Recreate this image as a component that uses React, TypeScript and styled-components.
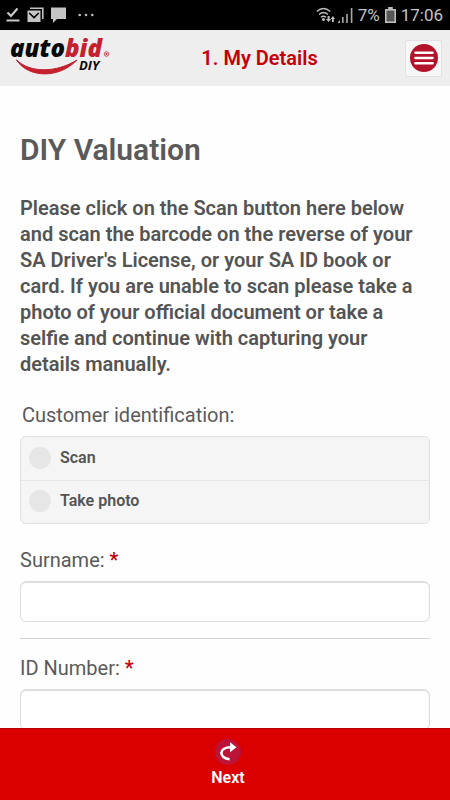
import React from "react";
import styled, { createGlobalStyle } from "styled-components";

const GlobalStyle = createGlobalStyle`
  *, *::before, *::after { box-sizing: border-box; }
  body { margin: 0; background: #fefefe; font-family: Roboto, "Liberation Sans", sans-serif; color: #545454; }
  h1, h2, p, fieldset, legend { margin: 0; padding: 0; border: 0; }
`;

const Screen = styled.div`
  display: flex;
  flex-direction: column;
  height: 100vh;
  overflow: hidden;
`;

const StatusBar = styled.div`
  display: flex;
  justify-content: space-between;
  align-items: center;
  flex: none;
  height: 30px;
  padding: 0 7px 0 6px;
  background: #000;
  color: #c4c4c4;
  font-size: 17px;
  line-height: 30px;
`;

const StatusGroup = styled.div<{ $gap: number }>`
  display: flex;
  align-items: center;
  gap: ${(p) => p.$gap}px;
  svg { display: block; }
`;

const Header = styled.header`
  display: grid;
  grid-template-columns: 1fr auto 1fr;
  align-items: center;
  flex: none;
  height: 56px;
  padding: 0 8px;
  background: #eee;
`;

const HomeLink = styled.a`
  justify-self: start;
  svg { display: block; }
`;

const PageTitle = styled.h1`
  padding-left: 69px;
  font-size: 20px;
  line-height: 24px;
  font-weight: 600;
  color: #c40008;
`;

const MenuButton = styled.button`
  justify-self: end;
  display: grid;
  place-items: center;
  width: 37px;
  height: 37px;
  padding: 0;
  border: 1px solid #e0e0e6;
  border-radius: 2px;
  background: #f7f7f8;
  cursor: pointer;
`;

const Content = styled.main`
  flex: 1;
  min-height: 0;
  overflow: hidden;
  padding: 46px 20px 0;
`;

const Heading = styled.h2`
  font-size: 30px;
  line-height: 36px;
  font-weight: 600;
  color: #5a5a5a;
`;

const Intro = styled.p`
  margin: 27px 0 0;
  font-size: 20px;
  line-height: 26px;
  font-weight: 600;
`;

const ChoiceGroup = styled.fieldset`
  min-width: 0;
  margin-top: 26px;
`;

const Legend = styled.legend`
  padding-left: 2px;
  font-size: 20px;
  line-height: 24px;
  color: #5a5a5a;
`;

const ChoiceBox = styled.div`
  margin-top: 9px;
  border: 1px solid #e0e0e0;
  border-radius: 6px;
  background: #f5f5f5;
  overflow: hidden;
`;

const Choice = styled.label`
  display: flex;
  align-items: center;
  gap: 9px;
  height: 43px;
  padding: 0 8px 2px;
  font-size: 16px;
  line-height: 20px;
  font-weight: 600;
  cursor: pointer;
  & + & { border-top: 1px solid #e6e6e6; }
`;

const Radio = styled.input`
  appearance: none;
  width: 22px;
  height: 22px;
  margin: 0;
  border-radius: 50%;
  background: #e6e6e6;
  &:checked { border: 6px solid #c40008; }
`;

const Field = styled.div`
  padding: 24px 0 16px;
  border-bottom: 1px solid #d4d4d4;
  & + & { padding-top: 17px; }
`;

const FieldLabel = styled.label`
  display: block;
  font-size: 20px;
  line-height: 24px;
  color: #5a5a5a;
`;

const Required = styled.span`
  color: #c40008;
  font-weight: 500;
`;

const TextInput = styled.input`
  display: block;
  width: 100%;
  height: 41px;
  margin-top: 9px;
  padding: 0 10px;
  border: 1px solid #dcdcdc;
  border-radius: 6px;
  background: #fff;
  box-shadow: inset 0 1px 1px #dcdcdc;
  font: inherit;
  font-size: 18px;
`;

const NextButton = styled.button`
  display: flex;
  flex-direction: column;
  align-items: center;
  gap: 3px;
  flex: none;
  height: 72px;
  padding: 10px 0 0 6px;
  border: 0;
  border-top: 1px solid #b80000;
  background: #da0000;
  color: #fff;
  font-family: inherit;
  font-size: 16px;
  line-height: 20px;
  font-weight: 600;
  cursor: pointer;
`;

const DownloadIcon = () => (
  <svg width="14" height="16" viewBox="0 0 14 16" aria-hidden="true">
    <path d="M1.5 5.5 5 9l6.5-7.5" fill="none" stroke="#c8c8c8" strokeWidth="2.2" />
    <path d="M0.5 13.5h13" stroke="#c8c8c8" strokeWidth="2" />
  </svg>
);

const MailIcon = () => (
  <svg width="17" height="16" viewBox="0 0 17 16" aria-hidden="true">
    <path d="M3 1.2h12.8V12" fill="none" stroke="#c4c4c4" strokeWidth="1.6" />
    <rect x="0.5" y="3.5" width="13" height="11.5" fill="#c4c4c4" />
    <path d="m2.2 6 4.8 4.6L11.8 6" fill="none" stroke="#000" strokeWidth="1.5" />
  </svg>
);

const ChatIcon = () => (
  <svg width="15" height="16" viewBox="0 0 15 16" aria-hidden="true">
    <path d="M0 0.5h15v11.5H6l-4 4v-4H0z" fill="#c4c4c4" />
  </svg>
);

const DotsIcon = () => (
  <svg width="16" height="4" viewBox="0 0 16 4" fill="#bdbdbd" aria-hidden="true">
    <circle cx="1.7" cy="2" r="1.3" />
    <circle cx="8" cy="2" r="1.3" />
    <circle cx="14.3" cy="2" r="1.3" />
  </svg>
);

const WifiIcon = () => (
  <svg width="20" height="16" viewBox="0 0 20 16" aria-hidden="true">
    <g fill="none" stroke="#bdbdbd" strokeWidth="1.4">
      <path d="M0.8 4.5Q7.5-1.7 14.2 4.5" />
      <path d="M3 7.5q4.5-4 9 0" />
      <path d="M5 10.2q2.5-2 5 0" />
    </g>
    <circle cx="7.5" cy="12.6" r="1.5" fill="#bdbdbd" />
    <path d="M11.6 9h2v3h1.6l-2.6 3-2.6-3h1.6zM16 15h1.8v-3h1.4l-2.3-3-2.3 3H16z" fill="#bdbdbd" />
  </svg>
);

const SignalIcon = () => (
  <svg width="15" height="15" viewBox="0 0 15 15" fill="#a8a8a8" aria-hidden="true">
    <path d="M0 15v-1l2-2v3zM4 9h1.6v6H4zM8.2 6h1.6v9H8.2zM12.8 0h1.6v15h-1.6z" />
  </svg>
);

const BatteryIcon = () => (
  <svg width="11" height="16" viewBox="0 0 11 16" aria-hidden="true">
    <path d="M3.2 0h4.6v2H11v14H0V2h3.2z" fill="#bdbdbd" />
    <path d="M1.6 3.6h7.8v10.8H1.6z" fill="#555" />
  </svg>
);

const Logo = () => (
  <svg width="104" height="56" viewBox="0 0 104 56" role="img" aria-label="autobid DIY">
    <path d="M8.5 30C22 43 48 43 69 30 51 49 20 48 8.5 30z" fill="#c4202e" stroke="#c4202e" strokeLinejoin="round" />
    <text x="2" y="27" fontFamily='"Open Sans", sans-serif' fontStyle="italic" fontWeight="800" fontSize="24" fill="#0a0a0a">
      auto<tspan fill="#c4202e">bid</tspan>
    </text>
    <circle cx="98.5" cy="24" r="2.3" fill="none" stroke="#d0505a" strokeWidth="1" />
    <circle cx="98.5" cy="24" r="0.9" fill="#c4202e" />
    <text x="71" y="40" fontFamily='"Open Sans", sans-serif' fontStyle="italic" fontWeight="700" fontSize="13" fill="#0a0a0a">
      DIY
    </text>
  </svg>
);

const MenuIcon = () => (
  <svg width="28" height="28" viewBox="0 0 28 28" aria-hidden="true">
    <circle cx="14" cy="14" r="14" fill="#b3142b" />
    <path d="M5.5 8.7h17M5.5 14h17M5.5 19.3h17" stroke="#fff" strokeWidth="2.6" strokeLinecap="round" />
  </svg>
);

const NextIcon = () => (
  <svg width="26" height="26" viewBox="0 0 26 26" aria-hidden="true">
    <circle cx="13" cy="13" r="13" fill="#bb1438" />
    <path d="M14.6 20.2C3.500 19.200 3.500 8.300 15.500 8.200" fill="none" stroke="#fff" strokeWidth="2.6" />
    <path d="M15 3.200 21.500 8.200l-6.500 5z" fill="#fff" />
  </svg>
);

const choices = ["Scan", "Take photo"];
const fields = [
  { id: "surname", label: "Surname:" },
  { id: "id-number", label: "ID Number:" },
];

export default function App() {
  return (
    <Screen>
      <GlobalStyle />
      <StatusBar>
        <StatusGroup $gap={12}>
          <StatusGroup $gap={7}>
            <DownloadIcon />
            <MailIcon />
            <ChatIcon />
          </StatusGroup>
          <DotsIcon />
        </StatusGroup>
        <StatusGroup $gap={5}>
          <StatusGroup $gap={2}>
            <WifiIcon />
            <SignalIcon />
          </StatusGroup>
          <span>7%</span>
          <BatteryIcon />
          <span>17:06</span>
        </StatusGroup>
      </StatusBar>
      <Header>
        <HomeLink href="#">
          <Logo />
        </HomeLink>
        <PageTitle>1. My Details</PageTitle>
        <MenuButton type="button" aria-label="Menu">
          <MenuIcon />
        </MenuButton>
      </Header>
      <Content>
        <Heading>DIY Valuation</Heading>
        <Intro>
          Please click on the Scan button here below and scan the barcode on the reverse of your SA
          Driver's License, or your SA ID book or card. If you are unable to scan please take a
          photo of your official document or take a selfie and continue with capturing your details
          manually.
        </Intro>
        <ChoiceGroup>
          <Legend>Customer identification:</Legend>
          <ChoiceBox>
            {choices.map((choice) => (
              <Choice key={choice}>
                <Radio type="radio" name="identification" value={choice} />
                {choice}
              </Choice>
            ))}
          </ChoiceBox>
        </ChoiceGroup>
        {fields.map((field) => (
          <Field key={field.id}>
            <FieldLabel htmlFor={field.id}>
              {field.label} <Required>*</Required>
            </FieldLabel>
            <TextInput id={field.id} type="text" required />
          </Field>
        ))}
      </Content>
      <NextButton type="button">
        <NextIcon />
        Next
      </NextButton>
    </Screen>
  );
}
